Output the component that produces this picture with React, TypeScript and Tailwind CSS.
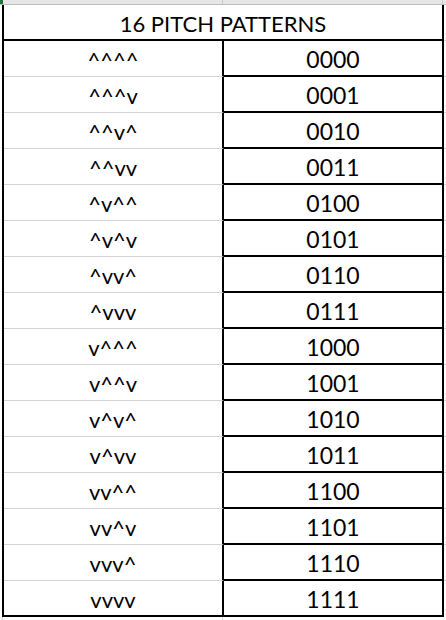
import React from "react";

const rows: [string, string][] = [
  ["^^^^", "0000"],
  ["^^^v", "0001"],
  ["^^v^", "0010"],
  ["^^vv", "0011"],
  ["^v^^", "0100"],
  ["^v^v", "0101"],
  ["^vv^", "0110"],
  ["^vvv", "0111"],
  ["v^^^", "1000"],
  ["v^^v", "1001"],
  ["v^v^", "1010"],
  ["v^vv", "1011"],
  ["vv^^", "1100"],
  ["vv^v", "1101"],
  ["vvv^", "1110"],
  ["vvvv", "1111"],
];

export default function App() {
  return (
    <div
      className="w-[446px] h-[620px] bg-white overflow-hidden relative text-black"
      style={{ fontFamily: "Lato, 'Open Sans', sans-serif" }}
    >
      {/* column header strip */}
      <div className="h-[5px] bg-[#e6e6e6] border-b border-[#bdbdbd] flex">
        <div className="w-[3px] h-full bg-[#217346]" />
        <div className="w-[220px] border-r border-[#c8c8c8]" />
        <div className="w-[220px] border-r border-[#c8c8c8]" />
      </div>
      <div className="flex">
        <div className="w-[2px]" />
        <div className="w-[442px] border-l-2 border-r-2 border-b-2 border-black">
          <div className="h-[36px] border-b-2 border-black flex items-center justify-center pt-[3px] text-[22px] leading-none">
            16 PITCH PATTERNS
          </div>
          {rows.map(([p, b], i) => {
            const last = i === rows.length - 1;
            return (
              <div key={b} className="flex">
                <div
                  className={`w-[220px] border-r-2 border-black flex items-center justify-center pt-[3px] text-[22px] leading-none ${
                    last ? "h-[34px]" : "h-[36px] border-b border-b-[#d4d4d4]"
                  }`}
                >
                  {p}
                </div>
                <div
                  className={`w-[218px] flex items-center justify-center pt-[3px] text-[23px] leading-none ${
                    last ? "h-[34px]" : "h-[36px] border-b-2 border-black"
                  }`}
                >
                  {b}
                </div>
              </div>
            );
          })}
        </div>
        <div className="flex-1 flex flex-col">
          {rows.map((_, i) => (
            <div key={i} className="h-[36px] border-b border-[#d4d4d4]" />
          ))}
        </div>
      </div>
      <div className="flex h-[3px]">
        <div className="w-[3px] border-r border-[#d4d4d4]" />
        <div className="w-[220px] border-r border-[#d4d4d4]" />
      </div>
    </div>
  );
}
